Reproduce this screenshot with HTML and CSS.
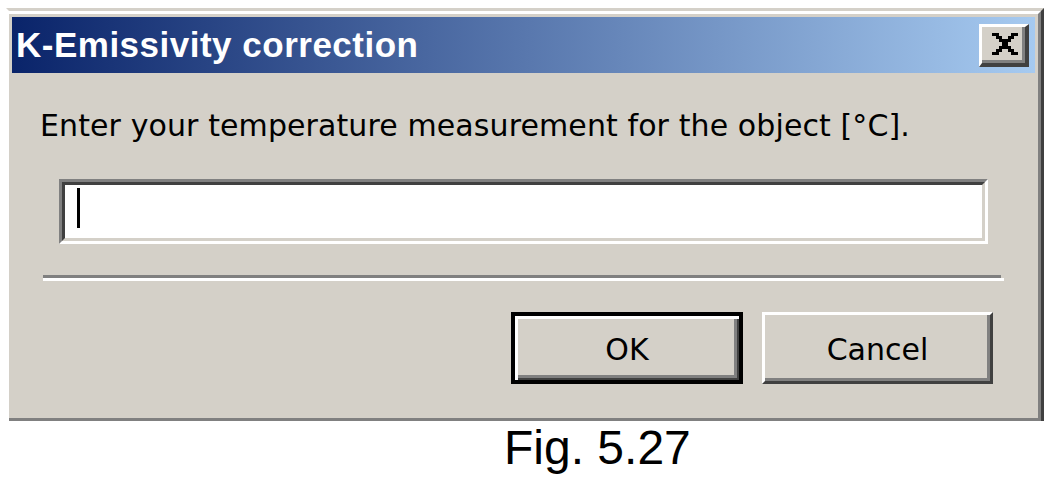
FILE: index.html
```html
<!DOCTYPE html>
<html>
<head>
<meta charset="utf-8">
<link rel="stylesheet" href="styles.css">
</head>
<body>
<div class="window">
  <div class="frame">
    <div class="titlebar">
      <span class="title">K-Emissivity correction</span>
      <div class="close">
        <svg class="xglyph" viewBox="0 0 8 7" width="26" height="22" shape-rendering="crispEdges">
          <g fill="#000">
            <rect x="0" y="0" width="2" height="1"/><rect x="6" y="0" width="2" height="1"/>
            <rect x="1" y="1" width="2" height="1"/><rect x="5" y="1" width="2" height="1"/>
            <rect x="2" y="2" width="4" height="1"/>
            <rect x="3" y="3" width="2" height="1"/>
            <rect x="2" y="4" width="4" height="1"/>
            <rect x="1" y="5" width="2" height="1"/><rect x="5" y="5" width="2" height="1"/>
            <rect x="0" y="6" width="2" height="1"/><rect x="6" y="6" width="2" height="1"/>
          </g>
        </svg>
      </div>
    </div>
    <div class="content">
      <div class="label">Enter your temperature measurement for the object [°C].</div>
      <div class="field"><div class="field-inner"><span class="caret"></span></div></div>
      <div class="sep"></div>
      <div class="buttons">
        <div class="btn btn-default">OK</div>
        <div class="btn">Cancel</div>
      </div>
    </div>
  </div>
</div>
<div class="caption">Fig. 5.27</div>
</body>
</html>
```

FILE: styles.css
```css
html, body {
  margin: 0;
  padding: 0;
  background: #fff;
}

.window {
  box-sizing: border-box;
  width: 1038px;
  margin: 8px 0 0 6px;
  border-top: 3px solid #d4d0c8;
  border-left: 3px solid #fff;
  border-right: 3px solid #404040;
  background: #d4d0c8;
}

.frame {
  border-top: 3px solid #fff;
  border-right: 3px solid #808080;
  border-bottom: 3px solid #808080;
  padding: 3px 3px 0 3px;
}

.titlebar {
  height: 56px;
  display: flex;
  align-items: center;
  justify-content: space-between;
  padding: 0 6px 0 4px;
  background: linear-gradient(to right, #0a246a, #a6caf0);
}

.title {
  font-family: "Liberation Sans", Arial, sans-serif;
  font-weight: bold;
  font-size: 35px;
  letter-spacing: 0.5px;
  color: #fff;
  line-height: 40px;
}

.close {
  box-sizing: border-box;
  width: 50px;
  height: 43px;
  background: #d4d0c8;
  border-top: 3px solid #fff;
  border-left: 3px solid #fff;
  border-right: 4px solid #404040;
  border-bottom: 4px solid #404040;
  box-shadow: inset -3px -3px 0 #808080;
  display: flex;
  align-items: center;
  justify-content: center;
  padding: 0 0 2px 2px;
}

.xglyph {
  display: block;
}

.content {
  padding: 35px 0 34px 0;
}

.label {
  font-family: "DejaVu Sans", Verdana, sans-serif;
  font-size: 30px;
  line-height: 36px;
  letter-spacing: 0.1px;
  color: #000;
  margin-left: 28px;
}

.field {
  box-sizing: border-box;
  width: 929px;
  height: 65px;
  margin: 35px 0 0 47px;
  border-top: 3px solid #808080;
  border-left: 3px solid #808080;
  border-right: 3px solid #fff;
  border-bottom: 3px solid #fff;
}

.field-inner {
  box-sizing: border-box;
  height: 100%;
  background: #fff;
  border-top: 3px solid #404040;
  border-left: 3px solid #404040;
  border-right: 3px solid #d4d0c8;
  border-bottom: 3px solid #d4d0c8;
  padding: 3px 0 0 12px;
}

.caret {
  display: block;
  width: 3px;
  height: 40px;
  background: #000;
}

.sep {
  width: 958px;
  height: 3px;
  margin: 31px 0 0 31px;
  background: #808080;
  box-shadow: 0 3px 0 #fff, 3px 3px 0 #fff;
}

.buttons {
  display: flex;
  justify-content: flex-end;
  gap: 19px;
  margin: 34px 42px 0 0;
}

.btn {
  box-sizing: border-box;
  width: 231px;
  height: 72px;
  display: flex;
  align-items: center;
  justify-content: center;
  font-family: "DejaVu Sans", Verdana, sans-serif;
  font-size: 30px;
  color: #000;
  border-top: 3px solid #fff;
  border-left: 3px solid #fff;
  border-right: 3px solid #404040;
  border-bottom: 3px solid #404040;
  box-shadow: inset -3px -3px 0 #808080;
  padding-top: 2px;
}

.btn-default {
  width: 232px;
  border: 4px solid #000;
  box-shadow: inset 3px 3px 0 #fff, inset -2px -2px 0 #404040, inset -5px -5px 0 #808080;
}

.caption {
  font-family: "Liberation Sans", Arial, sans-serif;
  font-size: 48px;
  line-height: 54px;
  color: #000;
  padding-left: 504px;
}
```
